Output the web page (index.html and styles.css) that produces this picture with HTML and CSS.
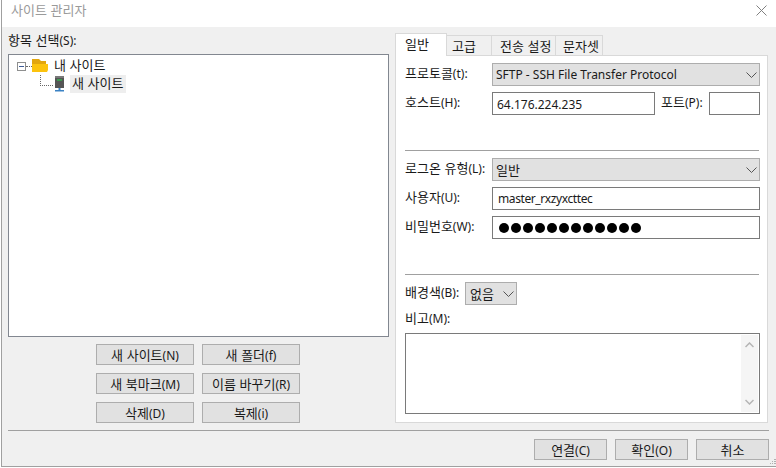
FILE: index.html
```html
<!DOCTYPE html>
<html lang="ko">
<head>
<meta charset="utf-8">
<title>사이트 관리자</title>
<link rel="stylesheet" href="styles.css">
</head>
<body>
<div class="window">
  <header class="titlebar">
    <span class="title">사이트 관리자</span>
    <svg class="close" width="11" height="11" viewBox="0 0 11 11"><path d="M.5.5l10 10M10.5.5l-10 10" stroke="#808080" fill="none"/></svg>
  </header>
  <main class="content">
    <div class="columns">
      <section class="left">
        <div class="left-label">항목 선택<span class="a">(S):</span></div>
        <div class="tree">
          <div class="tree-row">
            <span class="expander"></span>
            <span class="dots-h"></span>
            <svg class="folder" width="16" height="14" viewBox="0 0 16 14"><path d="M0 0h7l2 2h5v4H0z" fill="#e2a60f"/><path d="M0 13V5h16v6l-1 2z" fill="#fcc30e"/></svg>
            <span class="tree-text">내 사이트</span>
          </div>
          <div class="tree-row child">
            <span class="dots-l"></span>
            <svg class="server" width="9" height="16" viewBox="0 0 9 16"><path d="M0 0h9v12H0z" fill="#555"/><path d="M0 0h9v2H0z" fill="#7a7a7a"/><path d="M2 3h5v2H2z" fill="#3d9a50"/><path d="M3.500 12h2v2h-2z" fill="#3b82c4"/><path d="M0 14h9v1.500H0z" fill="#3b82c4"/></svg>
            <span class="tree-text selected">새 사이트</span>
          </div>
        </div>
        <div class="btn-grid">
          <button class="btn">새 사이트<span class="a">(N)</span></button>
          <button class="btn">새 폴더<span class="a">(f)</span></button>
          <button class="btn">새 북마크<span class="a">(M)</span></button>
          <button class="btn">이름 바꾸기<span class="a">(R)</span></button>
          <button class="btn">삭제<span class="a">(D)</span></button>
          <button class="btn">복제<span class="a">(i)</span></button>
        </div>
      </section>
      <section class="right">
        <nav class="tabs">
          <span class="tab active">일반</span>
          <span class="tab t2">고급</span>
          <span class="tab t3">전송 설정</span>
          <span class="tab t4">문자셋</span>
        </nav>
        <div class="panel">
          <div class="row r-proto">
            <span class="lab">프로토콜<span class="a">(t):</span></span>
            <div class="select grow"><span class="a">SFTP - SSH File Transfer Protocol</span><svg class="chev" width="11" height="6" viewBox="0 0 11 6"><path d="M.5.5l5 5 5-5" stroke="#555" fill="none"/></svg></div>
          </div>
          <div class="row r-host">
            <span class="lab">호스트<span class="a">(H):</span></span>
            <div class="input host"><span class="a">64.176.224.235</span></div>
            <span class="lab port-lab">포트<span class="a">(P):</span></span>
            <div class="input port"></div>
          </div>
          <hr class="sep s1">
          <div class="row r-login">
            <span class="lab">로그온 유형<span class="a">(L):</span></span>
            <div class="select grow">일반<svg class="chev" width="11" height="6" viewBox="0 0 11 6"><path d="M.5.5l5 5 5-5" stroke="#555" fill="none"/></svg></div>
          </div>
          <div class="row r-user">
            <span class="lab">사용자<span class="a">(U):</span></span>
            <div class="input grow user"><span class="a tight">master_rxzyxcttec</span></div>
          </div>
          <div class="row r-pass">
            <span class="lab">비밀번호<span class="a">(W):</span></span>
            <div class="input grow dots">
              <i></i><i></i><i></i><i></i><i></i><i></i><i></i><i></i><i></i><i></i><i></i><i></i>
            </div>
          </div>
          <hr class="sep s2">
          <div class="row r-color">
            <span class="lab lab-short">배경색<span class="a">(B):</span></span>
            <div class="select small">없음<svg class="chev" width="11" height="6" viewBox="0 0 11 6"><path d="M.5.5l5 5 5-5" stroke="#555" fill="none"/></svg></div>
          </div>
          <div class="note-label">비고<span class="a">(M):</span></div>
          <div class="note">
            <div class="scroll">
              <svg width="9" height="6" viewBox="0 0 9 6"><path d="M.5 5L4.500 1l4 4" stroke="#b5b5b5" stroke-width="1.500" fill="none"/></svg>
              <svg width="9" height="6" viewBox="0 0 9 6"><path d="M.5 1l4 4 4-4" stroke="#b5b5b5" stroke-width="1.500" fill="none"/></svg>
            </div>
          </div>
        </div>
      </section>
    </div>
    <hr class="foot-sep">
    <footer class="foot">
      <button class="btn fbtn">연결<span class="a">(C)</span></button>
      <button class="btn fbtn">확인<span class="a">(O)</span></button>
      <button class="btn fbtn">취소</button>
    </footer>
    <svg class="grip" width="6" height="6" viewBox="0 0 6 6"><path d="M4 0h2v1H4zM2 2h1v1H2zM4 2h2v1H4zM0 4h1v1H0zM2 4h1v1H2zM4 4h2v1H4z" fill="#b0b0b0"/></svg>
  </main>
</div>
</body>
</html>
```
FILE: styles.css
```css
* { box-sizing: border-box; }
html, body { margin: 0; padding: 0; height: 100%; overflow: hidden; background: #fff; }
body { font: 13px/16px "Noto Sans CJK KR", "Noto Sans", sans-serif; color: #1a1a1a; }
.a { font: 12px/16px "Noto Sans", "Noto Sans CJK KR", sans-serif; }
.tight { letter-spacing: -0.4px; }
.window { width: 775px; height: 467px; margin-left: 1px; border-left: 1px solid #a0a0a0; border-bottom: 1px solid #a0a0a0; display: flex; flex-direction: column; background: #f0f0f0; }
.titlebar { height: 27px; flex: none; background: #fff; display: flex; align-items: center; justify-content: space-between; padding: 0 9px 7px 9px; }
.title { color: #9a9a9a; }
.content { flex: 1; display: flex; flex-direction: column; padding: 0 6px; min-height: 0; position: relative; }
.columns { display: flex; height: 396px; flex: none; }
.left { width: 381px; flex: none; margin-right: 6px; }
.left-label { height: 27px; padding-top: 5px; }
.tree { height: 283px; background: #fff; border: 1px solid #828790; padding: 2px 0 0 8px; }
.tree-row { height: 18px; display: flex; align-items: center; position: relative; }
.expander { width: 9px; height: 9px; border: 1px solid #8e8f8f; position: relative; background: #fff; flex: none; }
.expander::after { content: ""; position: absolute; left: 1px; top: 3px; width: 5px; height: 1px; background: #3c5a96; }
.dots-h { width: 6px; border-top: 1px dotted #666; flex: none; }
.folder { flex: none; margin-right: 4px; }
.tree-row.child { padding-left: 38px; }
.dots-l { position: absolute; left: 23px; top: 0; width: 13px; height: 11px; border-left: 1px dotted #666; border-bottom: 1px dotted #666; }
.server { flex: none; margin-right: 6px; }
.tree-text { padding: 0 2px; line-height: 16px; height: 18px; white-space: nowrap; }
.selected { background: #eeeeee; width: 56px; flex: none; }
.btn-grid { display: grid; grid-template-columns: 98px 98px; grid-auto-rows: 21px; gap: 8px; padding-left: 88px; margin-top: 7px; }
.btn { font: inherit; color: #1a1a1a; background: #e1e1e1; border: 1px solid #adadad; padding: 0; height: 21px; line-height: 17px; }
.right { width: 373px; flex: none; }
.tabs { height: 22px; display: flex; align-items: flex-end; margin-top: 6px; position: relative; z-index: 1; }
.tab { height: 20px; background: #f0f0f0; border: 1px solid #d9d9d9; border-left: 0; border-bottom: 0; line-height: 19px; }
.tab.active { width: 52px; height: 23px; background: #fff; border-left: 1px solid #d9d9d9; margin-bottom: -1px; line-height: 20px; padding-left: 9px; }
.t2 { width: 45px; padding-left: 5px; }
.t3 { width: 64px; padding-left: 8px; }
.t4 { width: 47px; padding-left: 7px; }
.panel { height: 368px; background: #fff; border: 1px solid #d9d9d9; padding: 7px 7px 0 9px; display: flex; flex-direction: column; }
.row { display: flex; align-items: center; }
.lab { width: 87px; flex: none; position: relative; top: -1px; }
.lab-short { width: 60px; }
.grow { flex: 1; }
.select { height: 23px; background: #e1e1e1; border: 1px solid #adadad; padding: 0 2px 0 3px; display: flex; align-items: center; justify-content: space-between; }
.input { height: 23px; background: #fff; border: 1px solid #7a7a7a; padding-left: 4px; line-height: 21px; }
.user { line-height: 19px; padding-left: 5px; }
.host { width: 163px; }
.port-lab { width: 48px; margin-left: 6px; }
.port { width: 51px; }
.small { width: 52px; padding-left: 4px; }
.dots { display: flex; align-items: center; gap: 2px; padding-left: 6px; }
.dots i { width: 10px; height: 10px; border-radius: 50%; background: #000; display: block; }
.sep { height: 1px; margin: 0 1px 0 0; border: 0; background: #a0a0a0; flex: none; }
.s1 { margin-top: 35px; }
.r-host { margin-top: 6px; }
.r-login { margin-top: 7px; }
.r-user { margin-top: 6px; }
.r-pass { margin-top: 6px; }
.s2 { margin-top: 35px; }
.r-color { margin-top: 7px; }
.note-label { margin-top: 5px; height: 16px; }
.note { height: 81px; margin-top: 7px; background: #fff; border: 1px solid #7a7a7a; display: flex; justify-content: flex-end; padding: 1px; }
.scroll { width: 17px; background: #f5f5f5; display: flex; flex-direction: column; justify-content: space-between; align-items: center; padding: 7px 0; }
.scroll svg { display: block; }
.foot-sep { height: 1px; border: 0; margin: 7px 0 0 0; width: 761px; background: #a0a0a0; flex: none; }
.foot { display: flex; justify-content: flex-end; gap: 8px; margin-top: 8px; width: 761px; }
.fbtn { width: 73px; }
.grip { position: absolute; right: 0; bottom: 1px; }
```
